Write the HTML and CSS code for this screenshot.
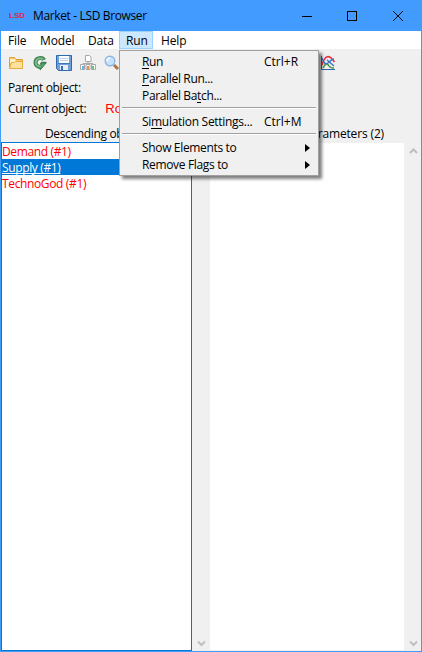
FILE: index.html
```html
<!DOCTYPE html>
<html lang="en">
<head>
<meta charset="utf-8">
<title>Market - LSD Browser</title>
<link rel="stylesheet" href="styles.css">
</head>
<body>
<div class="window">
  <header class="titlebar">
    <span class="logo">LSD</span>
    <span class="title">Market - LSD Browser</span>
    <svg class="controls" width="102" height="12" viewBox="0 0 102 12" fill="none" stroke="#000">
      <path d="M0 6.500h10M45.500 1.500h9v9h-9z" shape-rendering="crispEdges"/>
      <path d="M91 1l10 10M101 1L91 11"/>
    </svg>
  </header>
  <nav class="menubar">
    <span class="top file">File</span>
    <span class="top model">Model</span>
    <span class="top data">Data</span>
    <div class="top run open"><span>Run</span>
      <div class="menu">
        <div class="item"><span><u>R</u>un</span><span class="key">Ctrl+R</span></div>
        <div class="item"><span><u>P</u>arallel Run...</span></div>
        <div class="item"><span>Parallel Ba<u>t</u>ch...</span></div>
        <div class="sep"></div>
        <div class="item"><span class="settings">Si<u>m</u>ulation Settings...</span><span class="key">Ctrl+M</span></div>
        <div class="sep"></div>
        <div class="item"><span>Show Elements to</span><i class="arrow"></i></div>
        <div class="item"><span>Remove Flags to</span><i class="arrow"></i></div>
      </div>
    </div>
    <span class="top help">Help</span>
  </nav>
  <div class="toolbar">
    <svg width="16" height="16" viewBox="0 0 16 16"><path d="M1.500 13.500v-11h5l1 2h7v9z" fill="#f5c766" stroke="#e0a035"/><path d="M2 4h5l1 2h6v2H2z" fill="#fff0bd"/><path d="M1.500 13.500l2-6h3l1-1h7v7z" fill="#fde39a" stroke="#e5ad43"/></svg>
    <svg width="16" height="16" viewBox="0 0 16 16"><path d="M12 5C10.500 1.800 3.500 2.300 3.500 7.500c0 3.500 3 4.500 6 4.500" fill="none" stroke="#3d7f52" stroke-width="4"/><path d="M8.500 8h5.500l-4.500 5.500z" fill="#55a567" stroke="#3d7f52"/><path d="M9 7.500h5.500" stroke="#3d7f52" stroke-width="1.500"/><path d="M9 9.500v6l-3.500-3z" fill="#3d7f52"/><path d="M11.500 4.500C9.500 2.300 3.700 3 3.700 7.500c0 3.300 2.800 4.200 5.600 4.200" fill="none" stroke="#7cbf86" stroke-width="1.800"/></svg>
    <svg width="16" height="16" viewBox="0 0 16 16"><path d="M.5.500h15v15H2.500l-2-2z" fill="#729fd5" stroke="#2f67b1"/><path d="M3 1h10v7H3z" fill="#f8fbff"/><path d="M4 3.500h8M4 5.500h8" stroke="#bdd0e8"/><path d="M2 8h12v1H2z" fill="#3f77bd"/><path d="M4 10h8v5H4z" fill="#e5eefa"/><path d="M5 11h2v4H5z" fill="#376eb5"/></svg>
    <svg width="16" height="16" viewBox="0 0 16 16" fill="#fff" stroke="#a8a8a8"><path d="M8 6v3M3 11V8.500h10V11" fill="none"/><path d="M5.500.500h4l1.500 1.500v4.500h-5.500zM.5 9.500h4v5h-4zM6 9.500h4v5H6zM11.500 9.500h4v5h-4z"/><g stroke="none"><path d="M2 11h2v3H2z" fill="#5eb5e9"/><path d="M7 11h2v3H7z" fill="#f18b4c"/><path d="M12 11h2v3h-2z" fill="#67c27c"/></g></svg>
    <svg width="16" height="16" viewBox="0 0 16 16"><path d="M10 10l4 4" stroke="#ae7442" stroke-width="3"/><circle cx="6" cy="6" r="4.800" fill="#c7e3fc" stroke="#8cb5e2" stroke-width="1.400"/><path d="M3 6c0-2 1-3 3-3" stroke="#fff" stroke-width="1.500" fill="none"/></svg>
    <svg class="graph" width="16" height="16" viewBox="0 0 16 16" fill="none"><path d="M1.500 1v13.500H15" stroke="#2765ad"/><path d="M2 10C5 0 9-1 14.500 7" stroke="#ee3340" stroke-width="1.600"/><path d="M3 13c3-6 5-4 6-2s3 2 5 2" stroke="#4e9b45" stroke-width="1.600"/><path d="M2 3c3 8 5 6 7 4s3-3 5-3M7 5l7 6" stroke="#3978cf" stroke-width="1.500"/></svg>
  </div>
  <section class="info">
    <div class="line"><span class="parent">Parent object:</span></div>
    <div class="line"><span class="current">Current object:</span><span class="root">Root</span></div>
  </section>
  <div class="headings"><span class="desc">Descending objects (3)</span><span class="vars">Variables &amp; Parameters (2)</span></div>
  <main class="panes">
    <div class="list">
      <div class="row"><span>Demand (#1)</span></div>
      <div class="row selected"><span>Supply (#1)</span></div>
      <div class="row"><span>TechnoGod (#1)</span></div>
    </div>
    <div class="scroll first"><svg width="9" height="7" viewBox="0 0 9 7"><path d="M1 5l3.500-3.500L8 5"/></svg><svg width="9" height="7" viewBox="0 0 9 7"><path d="M1 1.500L4.500 5 8 1.500"/></svg></div>
    <div class="blank"></div>
    <div class="scroll"><svg width="9" height="7" viewBox="0 0 9 7"><path d="M1 5l3.500-3.500L8 5"/></svg><svg width="9" height="7" viewBox="0 0 9 7"><path d="M1 1.500L4.500 5 8 1.500"/></svg></div>
  </main>
</div>
</body>
</html>
```
FILE: styles.css
```css
* { box-sizing: border-box; }
body { margin: 0; font: 12px/16px "Open Sans", "Noto Sans", sans-serif; color: #000; letter-spacing: -.36px; }
.window { width: 422px; height: 652px; border: 1px solid #429bf5; border-top: 0; background: #f0f0f0; display: flex; flex-direction: column; overflow: hidden; white-space: nowrap; }
.titlebar { height: 31px; flex: none; background: #429cff; display: flex; align-items: center; padding: 0 17px 0 8px; }
.logo { width: 16px; font: bold 8px/10px "Liberation Sans", sans-serif; color: #d12f4b; letter-spacing: 0; }
.title { margin-left: 8px; }
.controls { margin-left: auto; }
.menubar { height: 18px; flex: none; background: #fff; display: flex; line-height: 19px; padding-left: 7px; letter-spacing: -.15px; }
.top { flex: none; }
.file { width: 32px; }
.model { width: 48px; }
.data { width: 31px; }
.run { width: 34px; height: 18px; padding-left: 6px; border: 1px solid #99d1ff; background: #cce8ff; position: relative; line-height: 17px; }
.help { margin-left: 8px; }
.menu { position: absolute; left: -1px; top: 18px; z-index: 2; width: 200px; height: 126px; padding: 3px 2px; border: 1px solid #a0a0a0; background: #f0f0f0; box-shadow: 3px 3px 3px rgba(0,0,0,.5); letter-spacing: -.34px; }
.item { height: 17px; line-height: 15px; display: flex; padding: 0 6px 2px 20px; align-items: center; }
.settings { letter-spacing: -.29px; }
.key { margin-left: auto; width: 46px; letter-spacing: 0; }
u { text-decoration: none; border-bottom: 1px solid #000; display: inline-block; line-height: 13px; }
.sep { height: 9px; padding-top: 2px; }
.sep::before { content: ""; display: block; height: 1px; background: #a0a0a0; box-shadow: 0 1px #fff; }
.arrow { margin-left: auto; border: 4px solid transparent; border-left: 5px solid #000; border-right: 0; }
.toolbar { height: 28px; flex: none; display: flex; gap: 8px; padding: 6px 0 0 7px; }
.graph { margin-left: 192px; }
.info { height: 46px; padding-left: 7px; }
.line { height: 21px; line-height: 22px; display: flex; }
.root { color: #f00; margin-left: 19px; font-family: "Liberation Sans", sans-serif; font-size: 13px; letter-spacing: 0; }
.headings { height: 19px; flex: none; display: flex; line-height: 21px; }
.desc { width: 184px; padding-left: 44px; flex: none; }
.vars { width: 199px; text-align: right; flex: none; letter-spacing: -.15px; }
.panes { flex: 1; min-height: 0; display: flex; }
.list { width: 191px; border: 1px solid #0078d7; background: #fff; color: #f00; }
.row { height: 16px; line-height: 17px; }
.selected { background: #0078d7; color: #fff; }
.selected span { text-decoration: underline; text-decoration-skip-ink: none; }
.scroll { width: 16px; display: flex; flex-direction: column; align-items: center; justify-content: space-between; padding: 6px 0 4px; background: #f0f0f0; }
.scroll svg { fill: none; stroke: #bfbfbf; stroke-width: 2; }
.first { width: 17px; margin-left: 1px; }
.blank { width: 194px; background: #fff; margin: 1px 1px 1px 0; }
```
